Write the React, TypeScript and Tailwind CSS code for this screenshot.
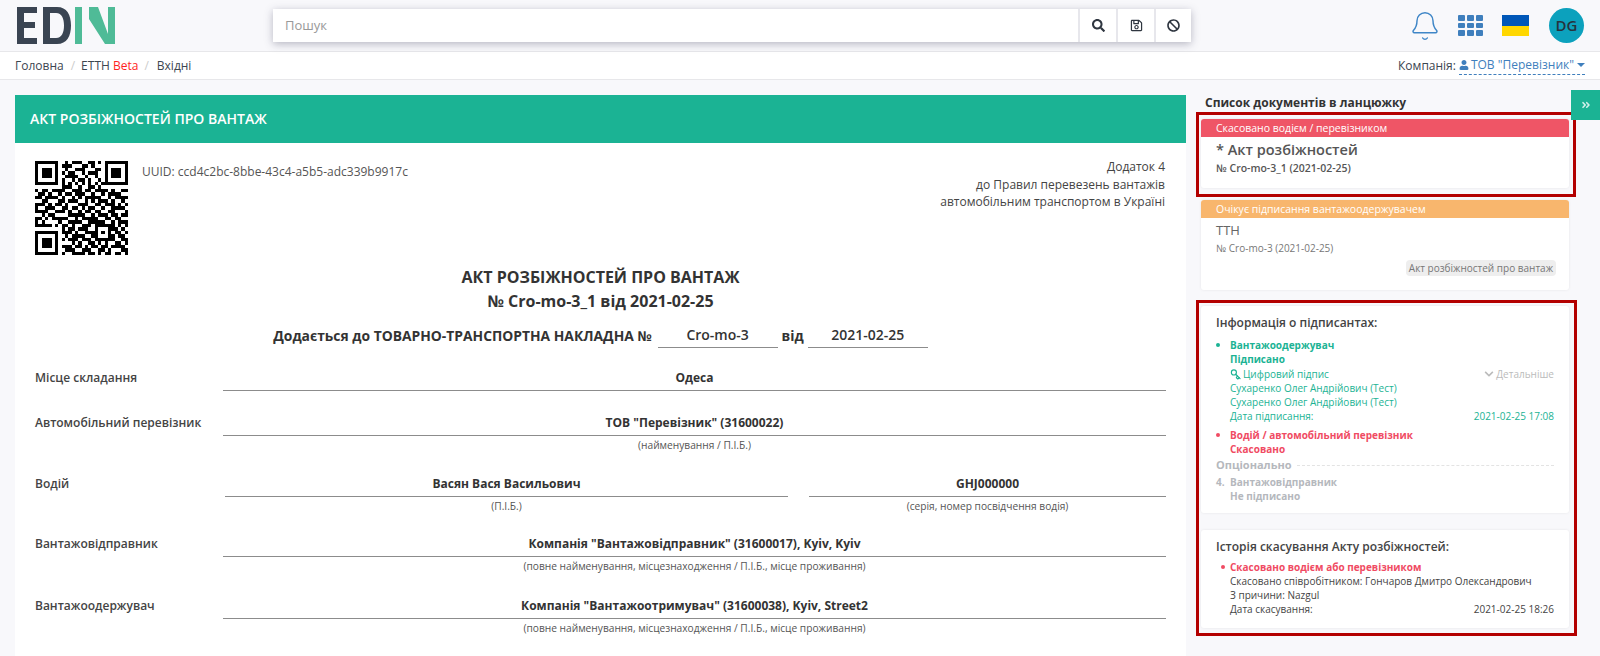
import React from 'react';
import { Bell, Key } from 'lucide-react';
import { FaAngleDoubleRight, FaBan, FaChevronDown, FaRegSave, FaSearch, FaUser } from 'react-icons/fa';

const QR = [
  '1111111001011100110101111111',
  '1000001011100011010001000001',
  '1011101001001110001101011101',
  '1011101010110010111001011101',
  '1011101001111001001001011101',
  '1000001010010110100101000001',
  '1111111010101010101011111111',
  '0000000011100100110100000000',
  '1011011110011101101111010011',
  '0110100101101110010010111100',
  '1101111010010101111100101111',
  '0011000110111001010111010010',
  '1110101101000111001101110101',
  '1001110011011010110010011110',
  '1111001110100101101100110001',
  '0010110000111110010111011011',
  '1101011111001011111001101100',
  '1010000100111100111110010111',
  '1111101011010011101111110101',
  '0000000010110111001000111010',
  '1111111011101001111010101101',
  '1000001001011110011000110110',
  '1011101010111011101111110011',
  '1011101000010100110101001101',
  '1011101011101101011011011110',
  '1000001001110011100110100011',
  '1111111010011110110101101101',
];

const QrCode = () => (
  <svg viewBox="0 0 28 27" width="93" height="94" shapeRendering="crispEdges" className="shrink-0" preserveAspectRatio="none">
    {QR.map((row, y) =>
      row.split('').map((c, x) => (c === '1' ? <rect key={`${x}-${y}`} x={x} y={y} width="1" height="1" fill="#000" /> : null)),
    )}
  </svg>
);

const Logo = () => (
  <svg width="98" height="37" viewBox="0 0 98 37" className="shrink-0">
    <path d="M0 0h20v6H7v9h11v6H7v10h13v6H0z" fill="#3a4452" />
    <path fillRule="evenodd" d="M26 0h14c10 0 14 8 14 18.500S50 37 40 37H26zM33 6v25h6c6 0 8-6 8-12.500S45 6 39 6z" fill="#3a4452" />
    <path d="M58 0h7v37h-7zM72 0h9l10 27v10h-3L72 12zM91 0h7v37h-7z" fill="#4fbb97" />
  </svg>
);

const GridIcon = () => (
  <div className="grid w-[25px] grid-cols-3 gap-[2px]">
    {Array.from({ length: 9 }).map((_, i) => (
      <div key={i} className="h-[5.5px] rounded-[1px] bg-[#3f7fbd]" />
    ))}
  </div>
);

const SearchBar = () => (
  <div className="ml-[158px] flex h-[33px] w-[918px] bg-white shadow-[0_2px_8px_rgba(60,60,90,0.35)]">
    <div className="flex flex-1 items-center pl-3 text-[13px] text-[#999]">Пошук</div>
    <button className="flex w-[38px] items-center justify-center border-l-2 border-[#e7e7ec] text-[#2f3640]">
      <FaSearch size={13} />
    </button>
    <button className="flex w-[38px] items-center justify-center border-l-2 border-[#e7e7ec] text-[#2f3640]">
      <FaRegSave size={13} />
    </button>
    <button className="flex w-[37px] items-center justify-center border-l-2 border-[#e7e7ec] text-[#2f3640]">
      <FaBan size={13} />
    </button>
  </div>
);

const TopBar = () => (
  <header className="flex h-[52px] items-center border-b border-[#e7e7ea] bg-[#f8f8fb] pl-[17px]">
    <Logo />
    <SearchBar />
    <div className="ml-[218px] flex items-center">
      <Bell size={32} strokeWidth={1.1} className="text-[#3f86c7]" />
      <div className="ml-[17px]">
        <GridIcon />
      </div>
      <div className="ml-[19px] flex h-[21px] w-[27px] flex-col">
        <div className="h-1/2 bg-[#0057b8]" />
        <div className="h-1/2 bg-[#ffd700]" />
      </div>
      <div className="ml-[20px] flex h-[35px] w-[35px] items-center justify-center rounded-full bg-[#0ca1bd] text-[15px] font-semibold text-[#26323d]">
        DG
      </div>
    </div>
  </header>
);

const Breadcrumbs = () => (
  <div className="flex h-[28px] items-center justify-between border-b border-[#e7e7ea] bg-white pl-[15px] pr-[15px] text-[12px] text-[#3c4650]">
    <div className="flex items-center">
      <span>Головна</span>
      <span className="ml-[7px] mr-[6px] text-[#ccc]">/</span>
      <span>
        ЕТТН <span className="text-[#ff1f1f]">Beta</span>
      </span>
      <span className="mx-[6px] text-[#ccc]">/</span>
      <span className="ml-[2px]">Вхідні</span>
    </div>
    <div className="flex items-center">
      <span>Компанія:</span>
      <span className="ml-[3px] flex items-center border-b border-dashed border-[#3f7fbd] text-[#3f7fbd]">
        <FaUser size={10} className="mr-[2px]" />
        ТОВ "Перевізник"
        <span className="ml-[3px] h-0 w-0 border-x-[4px] border-t-[4px] border-x-transparent border-t-[#3f7fbd]" />
      </span>
    </div>
  </div>
);

const Field = ({ value, hint, className }: { value: string; hint?: string; className?: string }) => (
  <div className={`flex flex-col items-center ${className ?? ''}`}>
    <div className="w-full border-b border-[#8c8c8c] pb-[1px] text-center text-[12px] font-bold leading-[23px] text-[#333]">{value}</div>
    {hint && <div className="mt-[1px] text-[10.2px] leading-[16px] text-[#555]">{hint}</div>}
  </div>
);

const Row = ({ label, className, children }: { label: string; className?: string; children: React.ReactNode }) => (
  <div className={`flex ${className ?? ''}`}>
    <div className="w-[188px] shrink-0 pt-[3px] text-[12px] font-semibold leading-[18px] text-[#444]">{label}</div>
    <div className="flex-1">{children}</div>
  </div>
);

const Document = () => (
  <section className="h-[561px] w-[1171px] shrink-0 overflow-hidden bg-white">
    <div className="flex h-[48px] items-center bg-[#1bb394] pb-[2px] pl-[15px] text-[14px] font-semibold text-white">АКТ РОЗБІЖНОСТЕЙ ПРО ВАНТАЖ</div>
    <div className="px-[20px] pt-[18px]">
      <div className="flex">
        <QrCode />
        <div className="ml-[14px] pt-[1px] text-[12px] leading-[20px] text-[#555]">UUID: ccd4c2bc-8bbe-43c4-a5b5-adc339b9917c</div>
        <div className="-mt-[3px] ml-auto self-start pr-[1px] text-right text-[12px] leading-[17.500px] text-[#444]">
          <div>Додаток 4</div>
          <div>до Правил перевезень вантажів</div>
          <div>автомобільним транспортом в Україні</div>
        </div>
      </div>
      <div className="mt-[11px] text-center text-[16px] font-bold leading-[23.500px] text-[#333]">
        <div>АКТ РОЗБІЖНОСТЕЙ ПРО ВАНТАЖ</div>
        <div>№ Cro-mo-3_1 від 2021-02-25</div>
      </div>
      <div className="mt-[10px] flex items-end justify-center text-[13.850px] font-bold text-[#333]">
        <span className="leading-[24px]">Додається до ТОВАРНО-ТРАНСПОРТНА НАКЛАДНА №</span>
        <span className="ml-[6px] w-[120px] border-b border-[#8c8c8c] text-center text-[14px] font-semibold leading-[24px]">Cro-mo-3</span>
        <span className="mx-[4px] leading-[24px]">від</span>
        <span className="w-[120px] border-b border-[#8c8c8c] text-center text-[14px] font-semibold leading-[24px]">2021-02-25</span>
      </div>
      <div className="mt-[18px]">
        <Row label="Місце складання">
          <Field value="Одеса" />
        </Row>
        <Row label="Автомобільний перевізник" className="mt-[20px]">
          <Field value="ТОВ &quot;Перевізник&quot; (31600022)" hint="(найменування / П.І.Б.)" />
        </Row>
        <Row label="Водій" className="mt-[19px]">
          <div className="flex gap-[21px] pl-[2px]">
            <Field value="Васян Вася Васильович" hint="(П.І.Б.)" className="w-[563px]" />
            <Field value="GHJ000000" hint="(серія, номер посвідчення водія)" className="flex-1" />
          </div>
        </Row>
        <Row label="Вантажовідправник" className="mt-[18px]">
          <Field value="Компанія &quot;Вантажовідправник&quot; (31600017), Kyiv, Kyiv" hint="(повне найменування, місцезнаходження / П.І.Б., місце проживання)" />
        </Row>
        <Row label="Вантажоодержувач" className="mt-[20px]">
          <Field value="Компанія &quot;Вантажоотримувач&quot; (31600038), Kyiv, Street2" hint="(повне найменування, місцезнаходження / П.І.Б., місце проживання)" />
        </Row>
      </div>
    </div>
  </section>
);

const ChainCard = ({ status, color, title, number, strong, children, className }: {
  status: string; color: string; title: string; number: string; strong?: boolean; children?: React.ReactNode; className?: string;
}) => (
  <div className={`overflow-hidden rounded-[3px] bg-white shadow-[0_0_3px_rgba(0,0,0,0.08)] ${className ?? ''}`}>
    <div className={`h-[18px] pl-[15px] text-[10.500px] leading-[18px] text-white ${color}`}>{status}</div>
    <div className={strong ? 'px-[15px] pt-[3px]' : 'px-[15px] pt-[2px]'}>
      <div className={strong ? 'text-[14.500px] font-semibold leading-[20px] text-[#555]' : 'text-[13px] leading-[20px] text-[#666]'}>{title}</div>
      <div className={strong ? 'text-[10.500px] font-semibold leading-[16px] text-[#555]' : 'text-[10px] leading-[16px] text-[#777]'}>{number}</div>
      {children}
    </div>
  </div>
);

const Dot = ({ className }: { className: string }) => <span className={`mt-[5px] block h-[4px] w-[4px] rounded-full ${className}`} />;

const Signers = () => (
  <div className="h-[207px] rounded-[3px] bg-white px-[15px] pt-[9px] text-[10px] leading-[14px] shadow-[0_0_3px_rgba(0,0,0,0.08)]">
    <div className="text-[12px] font-semibold leading-[16px] text-[#444]">Інформація о підписантах:</div>
    <div className="mt-[7px] flex text-[#1bb394]">
      <span className="w-[14px] shrink-0">
        <Dot className="bg-[#1bb394]" />
      </span>
      <div className="flex-1">
        <div className="font-bold">Вантажоодержувач</div>
        <div className="font-bold">Підписано</div>
        <div className="mt-[1px] flex items-center justify-between">
          <span className="flex items-center">
            <Key size={11} strokeWidth={2.5} className="mr-[2px] rotate-90" />
            Цифровий підпис
          </span>
          <span className="flex items-center text-[#bbb]">
            <FaChevronDown size={10} className="mr-[2px]" />
            Детальніше
          </span>
        </div>
        <div>Сухаренко Олег Андрійович (Тест)</div>
        <div>Сухаренко Олег Андрійович (Тест)</div>
        <div className="flex justify-between">
          <span>Дата підписання:</span>
          <span>2021-02-25 17:08</span>
        </div>
      </div>
    </div>
    <div className="mt-[5px] flex font-bold text-[#f04b63]">
      <span className="w-[14px] shrink-0">
        <Dot className="bg-[#f04b63]" />
      </span>
      <div>
        <div>Водій / автомобільний перевізник</div>
        <div>Скасовано</div>
      </div>
    </div>
    <div className="mt-[2px] flex items-center text-[11px] font-bold text-[#b5b8bd]">
      <span>Опціонально</span>
      <span className="ml-[5px] flex-1 border-t border-dashed border-[#e3e3e3]" />
    </div>
    <div className="mt-[3px] flex font-bold text-[#b5b8bd]">
      <span className="w-[14px] shrink-0">4.</span>
      <div>
        <div>Вантажовідправник</div>
        <div>Не підписано</div>
      </div>
    </div>
  </div>
);

const CancelHistory = () => (
  <div className="mt-[17px] h-[98px] rounded-[3px] bg-white px-[15px] pt-[9px] text-[10px] leading-[14px] text-[#444] shadow-[0_0_3px_rgba(0,0,0,0.08)]">
    <div className="text-[12px] font-semibold leading-[16px]">Історія скасування Акту розбіжностей:</div>
    <div className="mt-[5px] flex">
      <span className="w-[14px] shrink-0 pl-[5px]">
        <Dot className="bg-[#f04b63]" />
      </span>
      <div className="flex-1">
        <div className="font-bold text-[#f04b63]">Скасовано водієм або перевізником</div>
        <div>Скасовано співробітником: Гончаров Дмитро Олександрович</div>
        <div>З причини: Nazgul</div>
        <div className="flex justify-between">
          <span>Дата скасування:</span>
          <span>2021-02-25 18:26</span>
        </div>
      </div>
    </div>
  </div>
);

const Sidebar = () => (
  <aside className="relative ml-[10px] flex-1">
    <div className="-mt-[1px] pl-[9px] text-[12px] font-bold leading-[18px] text-[#333]">Список документів в ланцюжку</div>
    <div className="mr-[24px] border-[3px] border-[#b30000] pb-[6px] pl-[2px] pr-[4px] pt-[4px]">
      <ChainCard status="Скасовано водієм / перевізником" color="bg-[#ef5566]" title="* Акт розбіжностей" number="№ Cro-mo-3_1 (2021-02-25)" strong className="h-[69px]" />
    </div>
    <div className="mr-[24px] mt-[3px] pl-[5px] pr-[7px]">
      <ChainCard status="Очікує підписання вантажоодержувачем" color="bg-[#f8b66d]" title="ТТН" number="№ Cro-mo-3 (2021-02-25)" className="h-[90px]">
        <div className="-mr-[2px] mt-[4px] flex justify-end">
          <span className="rounded-[4px] bg-[#eee] px-[3px] text-[10px] leading-[16px] text-[#777]">Акт розбіжностей про вантаж</span>
        </div>
      </ChainCard>
    </div>
    <div className="mr-[23px] mt-[10px] border-[3px] border-[#b30000] pb-[5px] pl-[2px] pr-[5px] pt-[3px]">
      <Signers />
      <CancelHistory />
    </div>
    <div className="absolute -top-[5px] right-0 flex h-[30px] w-[29px] items-center justify-center bg-[#1bb394] text-white/80">
      <FaAngleDoubleRight size={10} />
    </div>
  </aside>
);

export default function App() {
  return (
    <div className="h-[656px] w-[1600px] overflow-hidden bg-[#f8f8fb] font-['Open_Sans',sans-serif]">
      <TopBar />
      <Breadcrumbs />
      <main className="flex pl-[15px] pt-[15px]">
        <Document />
        <Sidebar />
      </main>
    </div>
  );
}
